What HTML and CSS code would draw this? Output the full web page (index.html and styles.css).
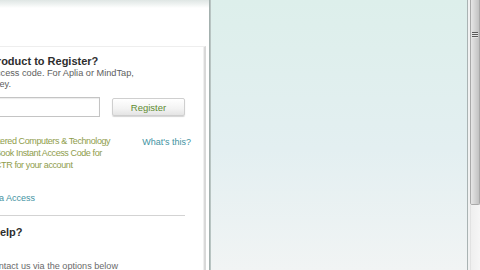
FILE: index.html
```html
<!DOCTYPE html>
<html>
<head>
<meta charset="utf-8">
<link rel="stylesheet" href="styles.css">
</head>
<body>
<div class="left">
  <div class="topbar"></div>
  <div class="card">
    <h2 class="title">Have a Product to Register?</h2>
    <p class="intro">Enter the access code. For Aplia or MindTap,<br>enter your key.</p>
    <div class="form-row">
      <input class="code-input" type="text">
      <button class="btn" type="button">Register</button>
    </div>
    <div class="info-row">
      <p class="green">Registered Computers &amp; Technology<br>the eBook Instant Access Code for<br>your CTR for your account</p>
      <a class="whats">What's this?</a>
    </div>
    <a class="link">Renew Media Access</a>
    <div class="rule"></div>
    <h2 class="help-title">Need Help?</h2>
    <p class="help-text">You can contact us via the options below</p>
  </div>
</div>
<div class="sep"></div>
<div class="main"></div>
<div class="rborder"></div>
<div class="rgap"></div>
<div class="scrollbar">
  <div class="thumb"><div class="grip"></div></div>
  <div class="track"></div>
</div>
</body>
</html>
```
FILE: styles.css
```css
html, body {
  margin: 0;
  padding: 0;
}
body {
  width: 480px;
  height: 270px;
  overflow: hidden;
  display: flex;
  font-family: "Liberation Sans", Arial, sans-serif;
  background: #fff;
}
.left {
  width: 209px;
  flex: none;
  background: #fff;
  overflow: hidden;
  display: flex;
  flex-direction: column;
}
.topbar {
  height: 8px;
  flex: none;
  background: linear-gradient(#dfe6e4, #eef2f1 50%, #fff);
}
.card {
  flex: none;
  box-sizing: border-box;
  width: 276px;
  margin-top: 38px;
  margin-left: -70px;
  height: 240px;
  border-top: 1px solid #eeeeee;
  border-right: 2px solid #d9d9d9;
  box-shadow: inset -1px 0 0 #efefef;
  padding: 7px 19px 0 21px;
}
.title {
  margin: 0;
  font-size: 11px;
  line-height: 14px;
  font-weight: bold;
  color: #2e2e2e;
  white-space: nowrap;
}
.intro {
  margin: 0;
  font-size: 9.2px;
  line-height: 11px;
  color: #5e5e5e;
  white-space: nowrap;
}
.form-row {
  display: flex;
  align-items: center;
  margin-top: 7px;
}
.code-input {
  box-sizing: border-box;
  width: 149px;
  height: 20px;
  margin: 0;
  border: 1px solid #c4c4c4;
  box-shadow: inset 0 1px 1px #ececec;
  background: #fff;
}
.btn {
  box-sizing: border-box;
  width: 73px;
  height: 18px;
  margin: 0 0 0 12px;
  padding: 0;
  border: 1px solid #cfcfcf;
  border-radius: 2px;
  background: linear-gradient(#ffffff, #f3f3f3 60%, #e4e4e4);
  box-shadow: 0 1px 1px #d4d4d4;
  font-family: "Liberation Sans", Arial, sans-serif;
  font-size: 9.5px;
  color: #5f8c32;
}
.info-row {
  display: flex;
  justify-content: space-between;
  align-items: flex-start;
  margin-top: 18px;
}
.green {
  margin: 0 0 0 26px;
  font-size: 9px;
  letter-spacing: -0.4px;
  line-height: 12px;
  color: #8f9d4c;
  white-space: nowrap;
}
.whats {
  margin-right: -6px;
  margin-top: 1px;
  font-size: 9px;
  line-height: 12px;
  color: #3f93a2;
  white-space: nowrap;
}
.link {
  display: block;
  margin-top: 21px;
  margin-left: -2px;
  font-size: 9px;
  line-height: 12px;
  color: #3f93a2;
  white-space: nowrap;
}
.rule {
  height: 1px;
  margin-top: 11px;
  background: #d3d3d3;
}
.help-title {
  margin: 9px 0 0 11px;
  font-size: 11px;
  line-height: 14px;
  font-weight: bold;
  color: #2e2e2e;
  white-space: nowrap;
}
.help-text {
  margin: 21px 0 0 3px;
  font-size: 9.1px;
  line-height: 12px;
  color: #6a6a6a;
  white-space: nowrap;
}
.sep {
  width: 2px;
  flex: none;
  background: linear-gradient(90deg, #98a6a4, #c3cecc);
}
.main {
  flex: 1;
  background: linear-gradient(#ddefeb, #e3eff1 55%, #f1f4f4);
}
.rborder {
  width: 1px;
  flex: none;
  background: #a9b3b3;
}
.rgap {
  width: 2px;
  flex: none;
  background: #f1f2f2;
}
.scrollbar {
  width: 10px;
  flex: none;
  display: flex;
  flex-direction: column;
}
.thumb {
  box-sizing: border-box;
  height: 205px;
  flex: none;
  border: 1px solid #a9a9a9;
  border-top: none;
  border-radius: 0 0 2px 2px;
  background: linear-gradient(90deg, #e6e6e6, #d4d4d4 50%, #c2c2c2);
  display: flex;
  justify-content: center;
  padding-top: 32px;
}
.grip {
  width: 6px;
  height: 6px;
  background: repeating-linear-gradient(#5a5a5a 0 1px, #e6e6e6 1px 2px);
}
.track {
  flex: 1;
  background: linear-gradient(90deg, #efefef, #f6f6f6);
  border-left: 1px solid #e2e2e2;
}
```
